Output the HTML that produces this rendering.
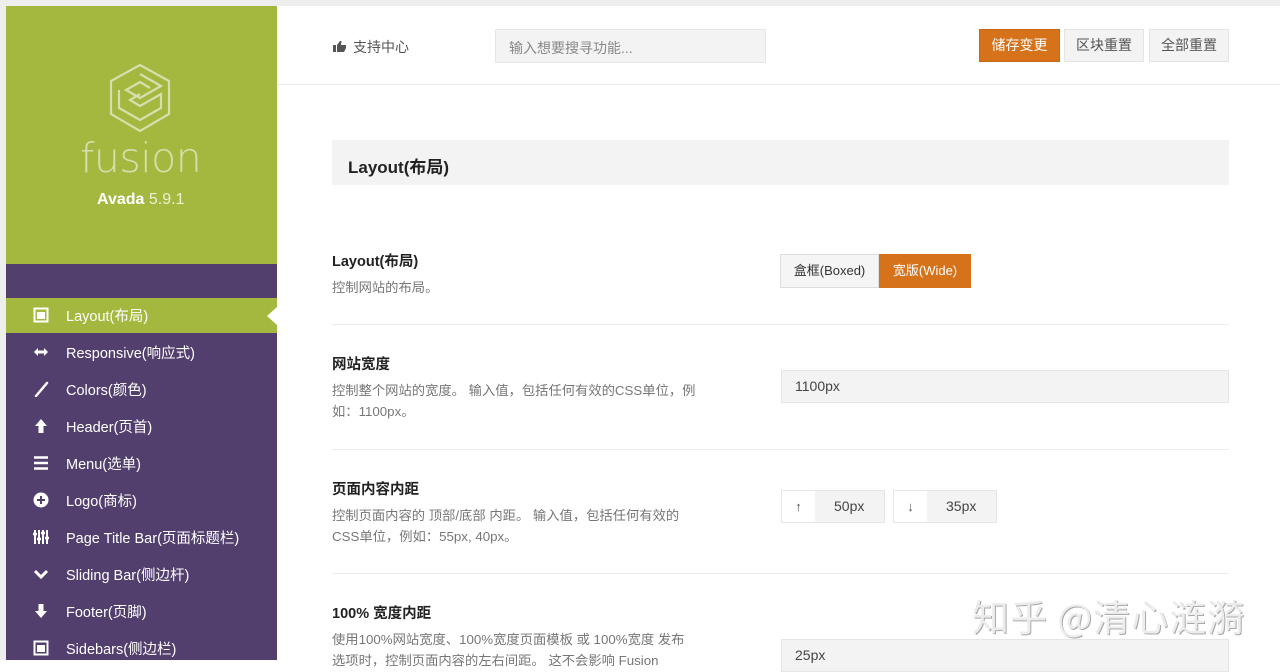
<!DOCTYPE html>
<html><head><meta charset="utf-8"><style>
*{margin:0;padding:0;box-sizing:border-box}
body{width:1280px;height:660px;overflow:hidden;background:#fff;font-family:"Liberation Sans","Noto Sans CJK SC",sans-serif;position:relative;color:#333}
.a{position:absolute;white-space:nowrap}
#top{left:0;top:0;width:1280px;height:6px;background:#eeeeee}
#lft{left:0;top:0;width:6px;height:660px;background:#eeeeee}
#sb{left:6px;top:6px;width:271px;height:654px;background:#523f6d}
#green{left:6px;top:6px;width:271px;height:258px;background:#a4b83f}
#act{left:6px;top:298px;width:271px;height:35px;background:#a4b83f}
.it{left:66px;font-size:14.5px;color:#fff;margin-top:-2px}
.ic{left:33px;margin-top:-1px}
.lab{left:332px;font-size:14.5px;font-weight:bold;color:#222}
.desc{left:332px;font-size:13.3px;color:#777;line-height:21px}
.hr{left:332px;width:897px;height:1px;background:#ececec}
.inp{background:#f3f3f3;border:1px solid #e6e6e6;font-size:14px;color:#444}
.btn{top:29px;height:33px;font-size:14px;line-height:31px;text-align:center;border:1px solid #e4e4e4;background:#f3f3f3;color:#555}
</style></head><body>
<div class="a" id="top"></div><div class="a" id="lft"></div>
<div class="a" id="sb"></div><div class="a" id="green"></div><div class="a" id="act"></div>
<svg class="a" style="left:105px;top:62px" width="70" height="72" viewBox="0 0 70 72" fill="none" stroke="#d9deaf" stroke-width="2.2">
<path d="M35 3 L64 19 L64 52 L35 69 L6 52 L6 19 Z"/>
<path d="M35 12 L56 24 L35 36 L21 28 L35 20 L45 26"/>
<path d="M14 28 L14 46 L35 58 L56 46 L56 32 L35 44 L25 38 L35 32"/>
</svg>
<div class="a" style="left:80px;top:134px;font-size:41px;color:#d9deaf;font-family:'DejaVu Sans',sans-serif;font-weight:200;letter-spacing:-0.5px;line-height:48px">fusion</div>
<div class="a" style="left:97px;top:191px;font-size:16px;color:#fff"><b>Avada</b> <span style="color:#eef0d6">5.9.1</span></div>
<svg class="a" style="left:267px;top:306px" width="11" height="20"><path d="M11 0 L0 10 L11 20Z" fill="#fff"/></svg>

<svg class="a ic" style="top:308px" width="16" height="16"><rect x="1.5" y="1.5" width="13" height="13" fill="none" stroke="#fff" stroke-width="2"/><rect x="4" y="5" width="8" height="7" fill="#fff"/></svg>
<div class="a it" style="top:307px">Layout(布局)</div>
<svg class="a ic" style="top:345px" width="16" height="16"><path d="M1 8 L5 4 L5 6.5 L11 6.5 L11 4 L15 8 L11 12 L11 9.5 L5 9.5 L5 12Z" fill="#fff"/></svg>
<div class="a it" style="top:344px">Responsive(响应式)</div>
<svg class="a ic" style="top:382px" width="16" height="16"><path d="M3 15 L14 2" stroke="#fff" stroke-width="2.5" stroke-linecap="round"/></svg>
<div class="a it" style="top:381px">Colors(颜色)</div>
<svg class="a ic" style="top:419px" width="16" height="16"><path d="M8 1 L14 8 L10.5 8 L10.5 15 L5.5 15 L5.5 8 L2 8Z" fill="#fff"/></svg>
<div class="a it" style="top:418px">Header(页首)</div>
<svg class="a ic" style="top:456px" width="16" height="16"><path d="M1 2.5h14M1 8h14M1 13.5h14" stroke="#fff" stroke-width="2.5"/></svg>
<div class="a it" style="top:455px">Menu(选单)</div>
<svg class="a ic" style="top:493px" width="16" height="16"><circle cx="8" cy="8" r="7.5" fill="#fff"/><path d="M8 4v8M4 8h8" stroke="#523f6d" stroke-width="2"/></svg>
<div class="a it" style="top:492px">Logo(商标)</div>
<svg class="a ic" style="top:530px" width="16" height="16"><path d="M2 1v14M6 1v14M10 1v14M14 1v14" stroke="#fff" stroke-width="2"/><path d="M0 5h4M4 10h4M8 4h4M12 9h4" stroke="#fff" stroke-width="2.5"/></svg>
<div class="a it" style="top:529px">Page Title Bar(页面标题栏)</div>
<svg class="a ic" style="top:567px" width="16" height="16"><path d="M2 5 L8 11 L14 5" fill="none" stroke="#fff" stroke-width="3"/></svg>
<div class="a it" style="top:566px">Sliding Bar(侧边杆)</div>
<svg class="a ic" style="top:604px" width="16" height="16"><path d="M8 15 L14 8 L10.5 8 L10.5 1 L5.5 1 L5.5 8 L2 8Z" fill="#fff"/></svg>
<div class="a it" style="top:603px">Footer(页脚)</div>
<svg class="a ic" style="top:641px" width="16" height="16"><rect x="1.5" y="1.5" width="13" height="13" fill="none" stroke="#fff" stroke-width="2"/><rect x="4" y="5" width="8" height="7" fill="#fff"/></svg>
<div class="a it" style="top:640px">Sidebars(侧边栏)</div>

<div class="a" style="left:277px;top:84px;width:1003px;height:1px;background:#ececec"></div>
<svg class="a" style="left:333px;top:40px" width="14" height="12"><path d="M0 5h3v7H0Z M4 5 L7 1 L8.5 1 L8 5 L13 5 L13 8 L11 12 L4 12Z" fill="#555"/></svg>
<div class="a" style="left:353px;top:37px;font-size:14px;color:#555">支持中心</div>
<div class="a inp" style="left:495px;top:29px;width:271px;height:34px;padding:8px 13px;color:#888">输入想要搜寻功能...</div>
<div class="a btn" style="left:979px;width:81px;background:#d5721a;border-color:#c8691a;color:#fff">储存变更</div>
<div class="a btn" style="left:1064px;width:80px">区块重置</div>
<div class="a btn" style="left:1149px;width:80px">全部重置</div>

<div class="a" style="left:332px;top:140px;width:897px;height:45px;background:#f3f3f3"></div>
<div class="a" style="left:348px;top:153px;font-size:17px;font-weight:bold;color:#222">Layout(布局)</div>

<div class="a lab" style="top:250px">Layout(布局)</div>
<div class="a desc" style="top:277px">控制网站的布局。</div>
<div class="a" style="left:780px;top:254px;width:99px;height:34px;border:1px solid #ddd;background:#f5f5f5;font-size:13px;line-height:32px;text-align:center">盒框(Boxed)</div>
<div class="a" style="left:879px;top:254px;width:92px;height:34px;background:#d5721a;color:#fff;font-size:13px;line-height:34px;text-align:center">宽版(Wide)</div>
<div class="a hr" style="top:324px"></div>

<div class="a lab" style="top:353px">网站宽度</div>
<div class="a desc" style="top:380px">控制整个网站的宽度。 输入值，包括任何有效的CSS单位，例<br>如：1100px。</div>
<div class="a inp" style="left:781px;top:370px;width:448px;height:33px;padding:7px 13px">1100px</div>
<div class="a hr" style="top:449px"></div>

<div class="a lab" style="top:478px">页面内容内距</div>
<div class="a desc" style="top:505px">控制页面内容的 顶部/底部 内距。 输入值，包括任何有效的<br>CSS单位，例如：55px, 40px。</div>
<div class="a" style="left:781px;top:490px;width:104px;height:33px;border:1px solid #e6e6e6;background:#f3f3f3"></div>
<div class="a" style="left:782px;top:491px;width:33px;height:31px;background:#fff;font-size:13px;text-align:center;line-height:31px;color:#555">↑</div>
<div class="a" style="left:834px;top:498px;font-size:14px;color:#444">50px</div>
<div class="a" style="left:893px;top:490px;width:104px;height:33px;border:1px solid #e6e6e6;background:#f3f3f3"></div>
<div class="a" style="left:894px;top:491px;width:33px;height:31px;background:#fff;font-size:13px;text-align:center;line-height:31px;color:#555">↓</div>
<div class="a" style="left:946px;top:498px;font-size:14px;color:#444">35px</div>
<div class="a hr" style="top:573px"></div>

<div class="a lab" style="top:602px">100% 宽度内距</div>
<div class="a desc" style="top:629px">使用100%网站宽度、100%宽度页面模板 或 100%宽度 发布<br>选项时，控制页面内容的左右间距。 这不会影响 Fusion</div>
<div class="a inp" style="left:781px;top:639px;width:448px;height:33px;padding:7px 13px">25px</div>

<div class="a" style="left:972px;top:588px;font-size:37px;color:#ececec;text-shadow:1px 1px 0 #aaa;font-family:'Noto Sans CJK SC',sans-serif;letter-spacing:1px">知乎 @清心涟漪</div>
</body></html>
